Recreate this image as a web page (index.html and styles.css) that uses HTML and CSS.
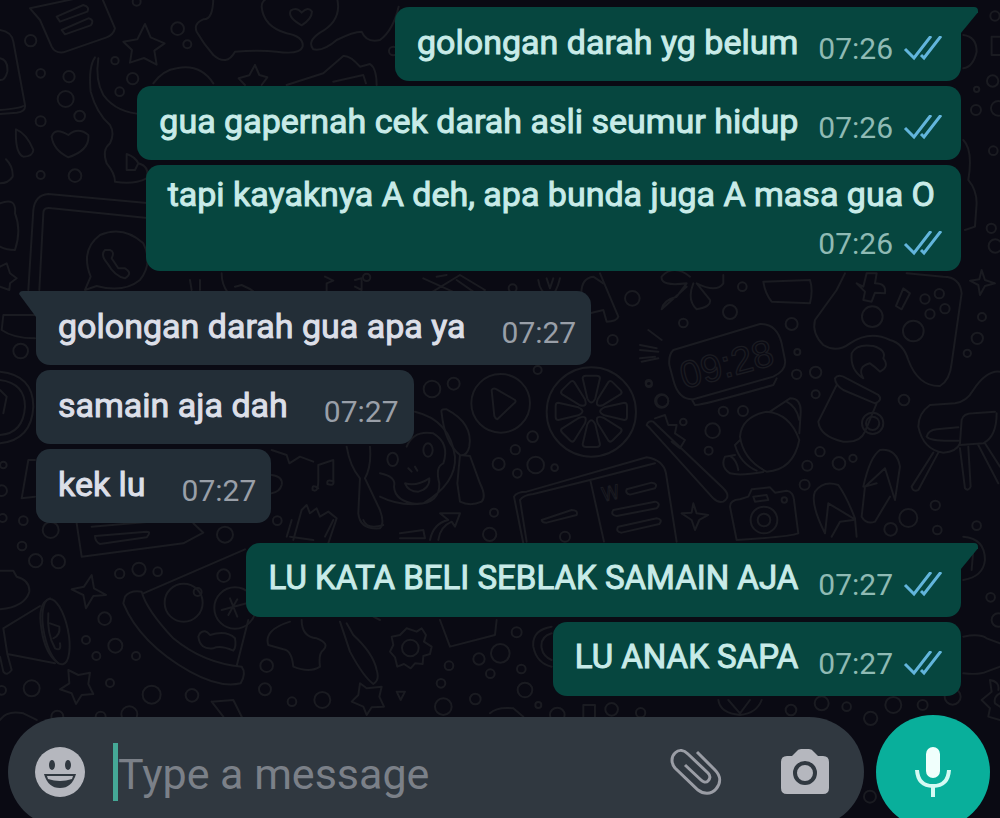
FILE: index.html
```html
<!DOCTYPE html>
<html lang="id">
<head>
    <meta charset="UTF-8">
    <meta name="viewport" content="width=device-width, initial-scale=1.0">
    <title>Chat</title>
    <link rel="stylesheet" href="styles.css">
</head>
<body>
<!-- Wallpaper -->
<svg class="wallpaper" viewBox="0 0 1000 818" preserveAspectRatio="xMinYMin slice" aria-hidden="true">
    <!-- Top left -->
    <g transform="scale(.3333)">
        <path d="M90 25L300-20L345 85Q340 105 320 112L190 157Q165 160 155 140L120 60Z M170 50L250 15Q270 20 262 35L180 65Z M185 90L265 55Q285 60 272 76L195 103Z"/>
        <path d="M435 72L452 112L494 130L463 152L470 194L432 174L390 188L396 150L370 125L412 118Z"/>
        <path d="M640-10Q640 60 610 58Q580 70 590 95Q610 130 640 165Q680 200 705 155Q780 150 830 155Q900 165 908 140Q912 110 860 100Q790 80 785 20Q785-5 820-10"/>
        <path d="M1010-10Q1030 60 960 98Q920 125 940 148Q970 155 1010 120Q1060 95 1085 95Q1100 130 1140 120Q1180 90 1196 20"/>
        <path d="M905 76Q862 52 872 32Q890 20 905 38Q925 18 936 35Q935 58 905 76Z"/>
        <path d="M0 90Q35 95 40 125L75 315Q78 335 50 338L0 342M0 330Q60 325 70 318M0 175Q25 180 22 215Q15 242 0 240"/>
        <path d="M285 172Q265 200 272 275Q290 340 330 375Q345 400 330 430Q305 450 320 490Q345 520 345 545Q400 555 440 535M295 175Q285 240 310 285Q350 340 430 342M380 510V462Q405 470 415 490Q450 500 440 535M380 510H405L415 490"/>
        <path d="M460 250Q490 210 530 205Q600 190 640 250M765 195L778 225L802 232L785 255M765 195L748 226L716 235L735 255M860 255L970 220L1030 168Q1050 165 1080 200L1110 192Q1130 205 1130 255M1000 245L1090 225L1098 250"/>
        <path d="M48 388Q80 400 100 450Q98 470 70 470Q45 460 48 388ZM18 478Q40 500 38 530Q25 550 0 550M205 472Q160 450 155 410Q165 380 205 405Q235 380 265 405Q270 450 205 472Z"/>
        <path d="M85 870L100 630Q105 585 145 582L450 610M118 870L130 640Q130 620 155 625L450 655"/>
        <path d="M255 870L272 830Q240 750 300 705Q370 675 430 730Q460 790 420 840Q370 880 290 858Z"/>
        <path d="M315 750Q300 765 322 790Q345 830 375 835Q400 820 375 805L355 805L335 775Q345 755 330 750Z"/>
        <path d="M0 610Q50 590 45 640Q65 690 45 750Q20 750 0 740M0 800L20 790L30 820L50 835L30 850L28 870L0 860"/>
        <circle cx="92" cy="122" r="17"/><circle cx="533" cy="86" r="19"/><circle cx="562" cy="133" r="12"/>
        <circle cx="345" cy="182" r="11"/><circle cx="122" cy="220" r="13"/><circle cx="207" cy="230" r="17"/>
        <circle cx="398" cy="236" r="17"/><circle cx="359" cy="275" r="13"/><circle cx="197" cy="297" r="24"/>
        <circle cx="239" cy="348" r="16"/><circle cx="122" cy="364" r="15"/><circle cx="122" cy="525" r="12"/>
        <circle cx="225" cy="527" r="19"/><circle cx="1180" cy="153" r="13"/><circle cx="410" cy="5" r="12"/>
    </g>
    <!-- Right edge -->
    <g transform="translate(600 0) scale(.3333)">
        <path d="M1090 105Q1130 110 1130 155Q1120 200 1090 205M1090 420Q1120 450 1105 540Q1130 570 1130 610L1125 680L1095 690M1175 110H1200M1175 110V165H1200"/>
        <circle cx="1185" cy="48" r="14"/><circle cx="1178" cy="243" r="17"/><circle cx="1130" cy="268" r="8"/>
        <circle cx="1128" cy="330" r="15"/><circle cx="1195" cy="325" r="22"/><circle cx="1180" cy="452" r="13"/>
        <circle cx="1174" cy="685" r="14"/><circle cx="1186" cy="738" r="20"/>
    </g>
    <!-- Strip between the first two groups -->
    <g transform="translate(0 260) scale(.3333)">
        <path d="M665 40Q665 75 685 100M705 80L725 75Q750 85 768 100M975 50L1000 62L980 70V100M1065 60L1085 55V90L1065 80M1270 55L1370 100M1290 100L1380 45L1455 90Q1450 105 1420 95L1370 60M1310 50L1340 45M1615 60Q1620 100 1650 110Q1670 100 1680 55M1640 55L1650 85L1660 55M1745 110Q1740 55 1780 50L1810 70"/>
        <circle cx="1100" cy="52" r="11"/><circle cx="1538" cy="85" r="12"/>
    </g>
    <!-- Left, beside the incoming messages -->
    <g transform="translate(0 280) scale(.3333)">
        <path d="M105 105H10L5 150Q40 175 105 175M0 275Q100 285 100 380Q95 480 0 490M0 300Q75 310 75 380Q70 460 0 465M0 330L20 350L10 400"/>
        <path d="M105 540H85L65 655L105 650M570 0L575 30M600 0L600 30"/>
        <path d="M815 510L860 525L868 550L900 530L940 545M815 585Q850 590 845 615Q840 635 815 640M955 625Q935 610 938 630Q955 640 955 600V555L1000 540V605Q980 595 982 612Q1005 620 1000 600"/>
        <path d="M880 780L905 690L920 675L930 700L950 685L960 710L985 695L1010 715L985 790M1040 500Q1050 560 1080 595L1075 700Q1080 750 1140 745Q1155 730 1140 690L1095 595Q1115 560 1110 500"/>
        <circle cx="62" cy="213" r="22"/><circle cx="70" cy="722" r="13"/><circle cx="8" cy="714" r="12"/>
        <circle cx="832" cy="722" r="13"/><circle cx="152" cy="750" r="24"/><circle cx="675" cy="764" r="24"/>
        <circle cx="5" cy="632" r="16"/><circle cx="10" cy="555" r="10"/>
    </g>
    <!-- Middle -->
    <g transform="translate(380 350) scale(.3333)">
        <circle cx="362" cy="160" r="88"/><path d="M335 120Q340 112 350 118L405 150Q410 155 400 162L352 208Q345 205 343 198Z"/>
        <circle cx="634" cy="186" r="134"/>
        <path id="slice" d="M608 85Q608 77 618 77H650Q660 77 660 85L646 145Q634 170 622 145Z"/>
        <use href="#slice" transform="rotate(45 634 184)"/><use href="#slice" transform="rotate(90 634 184)"/>
        <use href="#slice" transform="rotate(135 634 184)"/><use href="#slice" transform="rotate(180 634 184)"/>
        <use href="#slice" transform="rotate(225 634 184)"/><use href="#slice" transform="rotate(270 634 184)"/>
        <use href="#slice" transform="rotate(315 634 184)"/>
        <path d="M105 185Q210 210 225 320Q230 400 130 460Q60 470 0 440M80 290Q100 240 160 250Q210 280 190 340Q165 350 178 400Q180 460 110 462Q45 455 42 410Q50 380 0 370M75 400Q110 410 148 385Q150 415 115 425Q85 425 75 400Z"/>
        <path d="M85 355L95 365M105 350L112 362M185 190Q180 175 200 178Q280 220 268 290Q260 320 240 315Q195 280 185 190ZM240 315L232 400L240 455Q270 470 305 455Q320 440 300 400L270 318Z"/>
        <ellipse cx="38" cy="328" rx="16" ry="20"/><ellipse cx="144" cy="300" rx="14" ry="20"/>
        <path d="M430 580L402 440Q410 425 440 425L800 322Q850 330 858 370L890 575M440 575L420 450Q430 435 460 432L630 390L825 340M632 395L672 575M485 510L575 480Q595 480 590 495L500 518Q485 518 485 510Z"/>
        <path d="M740 418L815 398Q835 400 825 415L750 434Q735 430 740 418ZM700 480L825 455Q845 460 830 475L710 498Q690 495 700 480ZM715 530L830 505Q850 508 838 522L725 548Q705 545 715 530Z"/>
        <path d="M800 225Q805 210 820 215L1030 415Q1055 440 1030 455Q1015 460 1000 445L810 235ZM825 205L855 195L865 225L890 225L885 250L915 270L900 295L875 275"/>
        <path d="M60 550L130 540L135 565L60 565M150 570Q160 520 205 510L180 490L240 490L225 530L215 515Q180 530 175 570"/>
        <path d="M940 460L950 490L985 495L958 510L945 540L935 510L905 490L935 488Z"/>
        <circle cx="156" cy="117" r="25"/><circle cx="221" cy="101" r="18"/><circle cx="458" cy="260" r="16"/>
        <circle cx="406" cy="299" r="14"/><circle cx="356" cy="342" r="18"/><circle cx="467" cy="345" r="25"/>
        <circle cx="412" cy="370" r="13"/><circle cx="524" cy="353" r="10"/><circle cx="342" cy="488" r="12"/>
        <circle cx="329" cy="553" r="20"/><circle cx="847" cy="153" r="18"/><circle cx="806" cy="99" r="9"/>
        <circle cx="555" cy="560" r="15"/><circle cx="473" cy="60" r="12"/><circle cx="910" cy="216" r="10"/>
        <text class="doodle-w" x="670" y="455" transform="rotate(-12 670 455)">W</text>
    </g>
    <!-- Right of the incoming messages -->
    <g transform="translate(590 270) scale(.3333)">
        <path d="M250 240L510 162Q560 160 575 220L585 270Q590 300 550 320L310 388Q265 390 250 330L238 285Q235 255 250 240ZM305 388L315 405Q330 408 550 345L560 325"/>
        <text class="doodle-clock" x="282" y="357" transform="rotate(-15 282 357)">09:28</text>
        <path d="M765 10L740 60L675 150Q665 190 700 225Q740 250 780 220Q840 180 900 210Q940 220 955 270Q985 350 1050 348Q1080 330 1085 280L1115 70Q1110 20 1060 20L950 10"/>
        <path d="M800 40L820 50L830 10H860L855 40Q890 40 885 70L855 68L845 95L820 90L825 65ZM940 55L960 70L935 118L918 108Z"/>
        <path d="M820 325Q780 300 785 250Q800 220 850 228Q890 240 880 265Q900 290 870 305Q855 290 840 280Q800 290 820 325Z"/>
        <path d="M735 325Q745 310 770 325L865 375Q880 390 855 400L760 360Q735 345 735 325ZM740 345L685 455Q690 500 760 515Q810 520 825 485L860 400"/>
        <circle cx="848" cy="460" r="32"/><circle cx="848" cy="460" r="20"/>
        <path d="M450 500Q455 440 530 425Q600 430 628 510Q610 600 530 605Q460 570 450 500ZM540 425L600 385Q635 385 632 430L628 490M590 395Q620 410 628 450M435 525Q450 580 500 602M435 525L450 510M435 555L405 560Q390 590 420 610Q450 618 520 606M420 558Q440 570 445 600"/>
        <path d="M1230 305Q1190 300 1150 360Q1130 395 1095 400L1020 405Q985 430 985 470Q1000 540 1060 548Q1100 545 1110 520L1115 450Q1120 430 1150 430L1215 425M1110 525L1180 520Q1220 500 1220 430M1010 500Q1015 480 1040 478L1105 472M1010 500Q1020 515 1105 512M1030 548L965 650Q970 668 985 660L1045 548M1110 535L1125 655Q1135 665 1142 650L1135 530M1165 525L1225 640M1185 520L1230 590"/>
        <path d="M440 810L420 710Q420 690 450 688L475 680L485 658L540 652L555 668L590 662Q610 665 612 690L625 790Q600 800 440 810M490 680L530 675L535 690L495 695Z"/>
        <circle cx="522" cy="750" r="40"/><circle cx="522" cy="750" r="19"/><circle cx="583" cy="690" r="8"/>
        <path d="M705 790Q660 700 675 665Q700 630 745 645Q770 680 795 745L800 800M715 700L705 790M715 700L790 745M725 800L750 755L790 750M820 650Q840 560 870 540Q920 535 930 590L915 690L885 595L825 650L815 740Q830 765 855 755L900 680M825 650L860 640"/>
        <path d="M300 20Q250 -20 215 20Q210 50 290 40L260 80Q220 90 215 118L290 50M310 40Q290 90 320 118Q365 110 360 90L320 40Q380 70 400 40L400 15M520 35L660 30Q670 60 660 100L545 95Q525 70 520 35M30 10L85 140Q80 155 50 155L40 120L0 130M150 225L200 235M150 240L205 245M155 275L205 265M150 265L195 260M175 180L215 210"/>
        <path d="M1175 0L1185 30L1215 40L1185 48L1170 75L1165 45L1140 32L1168 28Z"/>
        <circle cx="127" cy="85" r="22"/><circle cx="420" cy="126" r="21"/><circle cx="605" cy="162" r="18"/>
        <circle cx="280" cy="159" r="13"/><circle cx="457" cy="50" r="13"/><circle cx="68" cy="210" r="15"/>
        <circle cx="847" cy="140" r="31"/><circle cx="970" cy="183" r="31"/><circle cx="1005" cy="87" r="14"/>
        <circle cx="1048" cy="71" r="14"/><circle cx="1020" cy="132" r="14"/><circle cx="1065" cy="116" r="14"/>
        <circle cx="1176" cy="141" r="12"/><circle cx="1162" cy="205" r="17"/><circle cx="1132" cy="250" r="11"/>
        <circle cx="215" cy="393" r="20"/><circle cx="177" cy="342" r="9"/><circle cx="368" cy="482" r="22"/>
        <circle cx="356" cy="542" r="12"/><circle cx="400" cy="424" r="14"/><circle cx="459" cy="423" r="15"/>
        <circle cx="620" cy="313" r="14"/><circle cx="677" cy="307" r="17"/><circle cx="677" cy="373" r="12"/>
        <circle cx="622" cy="246" r="9"/><circle cx="942" cy="390" r="16"/><circle cx="690" cy="545" r="14"/>
        <circle cx="652" cy="587" r="15"/><circle cx="747" cy="580" r="19"/><circle cx="789" cy="565" r="11"/>
        <circle cx="644" cy="644" r="15"/><circle cx="1036" cy="706" r="14"/><circle cx="955" cy="744" r="27"/>
        <circle cx="902" cy="778" r="19"/><circle cx="1042" cy="780" r="13"/><circle cx="1160" cy="767" r="13"/>
    </g>
    <!-- Bottom left -->
    <g transform="translate(0 520) scale(.3333)">
        <path d="M230 10L245 110L550 70L610 38L580 10M275 20L450 5M285 48L440 35Q455 35 440 52L300 72Q285 65 285 48"/>
        <path d="M275 165L282 205L318 225L280 228L258 265L250 225L215 208L252 200Z"/>
        <path d="M0 152H40L50 170Q90 180 88 215Q75 260 0 268M10 325L120 258M22 402L165 430M10 325L22 402L35 450Q20 470 10 455L0 410"/>
        <ellipse cx="168" cy="335" rx="36" ry="100" transform="rotate(-12 168 335)"/>
        <path d="M150 235Q110 250 125 330Q135 400 175 430M145 280Q140 340 165 385Q185 395 180 370M150 310L178 320Q182 345 160 355"/>
        <path d="M430 220L735 88M375 230Q390 210 425 215Q440 270 520 355Q610 430 725 440Q740 460 722 490Q660 505 570 455Q420 370 370 250ZM745 300L710 438"/>
        <circle cx="551" cy="248" r="57"/><circle cx="593" cy="216" r="12"/><circle cx="705" cy="264" r="62"/>
        <path d="M665 270L740 250M690 235L712 290M712 238L685 285M600 340Q615 325 630 345Q680 330 705 355Q710 380 700 392Q660 375 640 385Q600 390 595 350Z"/>
        <path d="M205 450L235 465L270 458L265 492L280 522L245 525L228 552L215 520L180 508L208 490Z"/>
        <path d="M905 300Q905 350 950 355Q990 370 970 390Q955 400 960 440Q930 460 880 440Q875 390 850 388L805 375Q790 330 870 305M0 600Q20 570 70 580L110 600M635 545L700 540L730 600M635 545L670 590"/>
        <circle cx="107" cy="122" r="20"/><circle cx="175" cy="125" r="20"/><circle cx="66" cy="78" r="13"/>
        <circle cx="359" cy="161" r="14"/><circle cx="417" cy="148" r="20"/><circle cx="473" cy="155" r="13"/>
        <circle cx="671" cy="167" r="19"/><circle cx="314" cy="296" r="19"/><circle cx="258" cy="360" r="12"/>
        <circle cx="346" cy="377" r="21"/><circle cx="289" cy="408" r="12"/><circle cx="408" cy="408" r="12"/>
        <circle cx="95" cy="505" r="24"/><circle cx="330" cy="489" r="12"/><circle cx="455" cy="524" r="27"/>
        <circle cx="576" cy="526" r="19"/><circle cx="5" cy="511" r="13"/><circle cx="388" cy="583" r="24"/>
        <circle cx="800" cy="437" r="19"/><circle cx="795" cy="508" r="18"/><circle cx="876" cy="545" r="13"/>
        <circle cx="967" cy="540" r="24"/><circle cx="172" cy="590" r="18"/><circle cx="302" cy="590" r="15"/>
    </g>
    <!-- Bottom middle -->
    <g transform="translate(250 520) scale(.3333)">
        <path d="M270 305L300 395Q340 470 370 492Q390 480 380 450Q370 400 310 345L290 310M570 300L600 380L735 345L740 300M905 320Q845 330 850 380Q860 430 905 440M905 340Q870 350 875 385Q880 410 905 420"/>
        <path d="M470 325L500 335L515 325L528 345L522 365L545 380L540 402L520 408L518 432L495 430L482 445L462 432L442 440L435 412L420 395L430 375L425 350L450 345Z"/>
        <circle cx="481" cy="384" r="25"/>
        <path d="M330 490L350 505L395 500L388 530L402 560L365 562L350 585L340 560L305 545L325 525ZM440 515L465 515L452 540ZM370 290L390 300M110 50L125 0M225 50L250 0M120 50L190 60M340 0Q350 30 400 15"/>
        <path d="M720 580Q740 560 790 565L820 590M1000 590L1000 555H1035V590"/>
        <circle cx="800" cy="337" r="15"/><circle cx="751" cy="400" r="28"/>
        <circle cx="687" cy="417" r="17"/><circle cx="597" cy="437" r="13"/><circle cx="814" cy="447" r="13"/>
        <circle cx="721" cy="461" r="13"/><circle cx="573" cy="490" r="13"/><circle cx="825" cy="510" r="22"/>
        <circle cx="676" cy="537" r="16"/><circle cx="580" cy="560" r="25"/><circle cx="865" cy="555" r="9"/>
        <circle cx="922" cy="585" r="22"/><circle cx="1085" cy="568" r="19"/><circle cx="1172" cy="578" r="14"/>
    </g>
    <!-- Bottom right -->
    <g transform="translate(640 530) scale(.3333)">
        <path d="M235 510Q240 550 300 555Q350 550 365 510M265 510L300 550L330 510M970 20Q1035 25 1035 90Q1030 140 970 150M970 80L1000 60L995 120M970 320Q1020 310 1040 325L1080 340M970 430Q1020 435 1040 425L1080 410"/>
        <path d="M1050 450Q1080 455 1075 480M1050 450L1055 485L1025 510L1050 535L1045 560L1080 570M1080 490Q1060 500 1065 520L1080 530"/>
        <circle cx="453" cy="540" r="16"/><circle cx="545" cy="520" r="21"/><circle cx="620" cy="530" r="13"/>
        <circle cx="692" cy="565" r="20"/><circle cx="760" cy="525" r="24"/><circle cx="848" cy="525" r="15"/>
        <circle cx="938" cy="500" r="24"/><circle cx="1052" cy="202" r="13"/><circle cx="1075" cy="270" r="20"/>
        <circle cx="690" cy="800" r="18"/>
    </g>
</svg>

<!-- Shared tick icon -->
<svg class="sprite" aria-hidden="true">
    <symbol id="ticks" viewBox="0 0 40 26">
        <path d="M2 13L11 22L28 0M18 19L21 22L38 0" fill="none" stroke="currentColor" stroke-width="3"/>
    </symbol>
</svg>

<div class="chat">
    <main class="messages">
        <div class="group sent">
            <div class="bubble tail">
                <span class="text">golongan darah yg belum</span>
                <span class="meta"><time>07:26</time><svg class="ticks"><use href="#ticks"/></svg></span>
            </div>
            <div class="bubble">
                <span class="text">gua gapernah cek darah asli seumur hidup</span>
                <span class="meta"><time>07:26</time><svg class="ticks"><use href="#ticks"/></svg></span>
            </div>
            <div class="bubble stacked">
                <span class="text">tapi kayaknya A deh, apa bunda juga A masa gua O</span>
                <span class="meta"><time>07:26</time><svg class="ticks"><use href="#ticks"/></svg></span>
            </div>
        </div>
        <div class="group received">
            <div class="bubble tail">
                <span class="text">golongan darah gua apa ya</span>
                <span class="meta"><time>07:27</time></span>
            </div>
            <div class="bubble">
                <span class="text">samain aja dah</span>
                <span class="meta"><time>07:27</time></span>
            </div>
            <div class="bubble">
                <span class="text">kek lu</span>
                <span class="meta"><time>07:27</time></span>
            </div>
        </div>
        <div class="group sent">
            <div class="bubble tail">
                <span class="text caps">LU KATA BELI SEBLAK SAMAIN AJA</span>
                <span class="meta"><time>07:27</time><svg class="ticks"><use href="#ticks"/></svg></span>
            </div>
            <div class="bubble">
                <span class="text caps">LU ANAK SAPA</span>
                <span class="meta"><time>07:27</time><svg class="ticks"><use href="#ticks"/></svg></span>
            </div>
        </div>
    </main>

    <form class="composer">
        <div class="field">
            <button type="button" class="icon-btn" aria-label="Emoji">
                <svg width="50" height="50" viewBox="0 0 50 50">
                    <circle cx="25" cy="25" r="25" fill="#b5b7be"/>
                    <ellipse cx="17" cy="18" rx="3" ry="5" fill="#303840"/>
                    <ellipse cx="33" cy="18" rx="3" ry="5" fill="#303840"/>
                    <path d="M9 27H41Q37 41 25 41Q13 41 9 27Z" fill="#303840"/>
                    <path d="M12 29H38L37 32Q25 36 13 32Z" fill="#b5b7be"/>
                </svg>
            </button>
            <div class="entry">
                <input type="text" placeholder="Type a message" aria-label="Message">
            </div>
            <button type="button" class="icon-btn" aria-label="Attach">
                <svg width="52" height="48" viewBox="0 0 52 48">
                    <path d="M27 4L45 22C51 28 51 35 46 41C41 47 33 46 28 42L5 20C1 15 1 9 5 5C9 1 14 2 18 6L38 25C41 28 40 31 38 33C36 35 33 34 31 32L15 17" fill="none" stroke="#9a9da5" stroke-width="3"/>
                </svg>
            </button>
            <button type="button" class="icon-btn" aria-label="Camera">
                <svg width="50" height="46" viewBox="0 0 50 46">
                    <path d="M7 7H12L16 3Q18 0 21 0H29Q32 0 34 3L38 7H43Q49 7 49 13V39Q49 45 43 45H7Q1 45 1 39V13Q1 7 7 7Z" fill="#b5b7be"/>
                    <circle cx="25" cy="24" r="10" fill="none" stroke="#303840" stroke-width="4"/>
                </svg>
            </button>
        </div>
        <button type="button" class="mic-btn" aria-label="Voice message">
            <svg width="38" height="52" viewBox="0 0 38 52">
                <rect x="12" y="1" width="14" height="31" rx="7" fill="#f0fffc"/>
                <path d="M3 24Q4 40 19 40Q34 40 35 24M19 40V51" fill="none" stroke="#d5faf3" stroke-width="4"/>
            </svg>
        </button>
    </form>
</div>
</body>
</html>
```
FILE: styles.css
```css
body {
    margin: 0;
    height: 100vh;
    overflow: hidden;
    background-color: #0a0a13;
    font-family: Roboto, sans-serif;
}

.wallpaper {
    position: absolute;
    top: 0;
    left: 0;
    width: 100%;
    height: 100%;
    fill: none;
    stroke: #1a1b21;
    stroke-width: 6;
    stroke-linejoin: round;
    stroke-linecap: round;
}

.doodle-clock {
    font-family: "Liberation Sans", sans-serif;
    font-size: 114px;
    stroke-width: 4;
}

.doodle-w {
    font-family: Roboto, sans-serif;
    font-size: 60px;
    stroke-width: 3;
}

.sprite {
    position: absolute;
    width: 0;
    height: 0;
}

.chat {
    position: relative;
    display: flex;
    flex-direction: column;
}

.messages {
    display: flex;
    flex-direction: column;
    gap: 20px;
    padding: 7px 39px 19px 36px;
}

.group {
    display: flex;
    flex-direction: column;
    gap: 5px;
}

.sent {
    align-items: flex-end;
}

.received {
    align-items: flex-start;
}

.bubble {
    position: relative;
    display: flex;
    gap: 20px;
    box-sizing: border-box;
    min-height: 74px;
    padding: 14px 18px 15px 22px;
    border-radius: 14px;
    line-height: 42px;
}

.sent .bubble {
    background-color: #06463f;
    color: #c8ebe8;
}

.received .bubble {
    gap: 36px;
    padding-right: 15px;
    background-color: #232e37;
    color: #dcdfe8;
}

.bubble.stacked {
    flex-direction: column;
    gap: 12px;
    padding-top: 8px;
    padding-bottom: 10px;
}

.text {
    font-size: 34px;
    -webkit-text-stroke: 1px currentColor;
}

.text.caps {
    font-size: 33px;
}

.stacked .text {
    padding-right: 8px;
}

/* Little corner pointing to the sender */
.tail::before {
    content: "";
    position: absolute;
    top: 0;
    width: 17px;
    height: 26px;
    background-color: inherit;
}

.sent .tail {
    border-top-right-radius: 0;
}

.sent .tail::before {
    left: 100%;
    border-top-right-radius: 4px;
    clip-path: polygon(0 0, 100% 0, 100% 20%, 0 100%);
}

.received .tail {
    border-top-left-radius: 0;
}

.received .tail::before {
    right: 100%;
    border-top-left-radius: 4px;
    clip-path: polygon(0 0, 100% 0, 100% 100%, 0 12%);
}

.meta {
    display: flex;
    align-items: center;
    align-self: flex-end;
    gap: 10px;
    font-size: 30px;
    line-height: 34px;
}

.sent .meta {
    color: #8fbab4;
}

.received .meta {
    color: #999fa8;
}

.ticks {
    width: 40px;
    height: 26px;
    color: #62b5dc;
}

.composer {
    display: flex;
    align-items: center;
    gap: 12px;
    padding: 0 10px 0 8px;
}

.field {
    flex: 1;
    display: flex;
    align-items: center;
    box-sizing: border-box;
    min-width: 0;
    height: 110px;
    padding: 0 34px 0 27px;
    border-radius: 55px;
    background-color: #303840;
}

.icon-btn {
    display: flex;
    flex-shrink: 0;
    padding: 0;
    border: none;
    background: none;
    cursor: pointer;
}

.icon-btn + .icon-btn {
    margin-left: 58px;
}

.entry {
    flex: 1;
    display: flex;
    align-items: center;
    min-width: 0;
    margin: 0 28px;
    border-left: 5px solid #45a896;
}

.entry input {
    flex: 1;
    min-width: 0;
    height: 58px;
    padding: 4px 0 0;
    box-sizing: border-box;
    border: none;
    outline: none;
    background: none;
    color: #dcdfe8;
    font-family: inherit;
    font-size: 43px;
}

.entry input::placeholder {
    color: #7b8088;
    opacity: 1;
}

.mic-btn {
    display: flex;
    flex-shrink: 0;
    align-items: center;
    justify-content: center;
    width: 114px;
    height: 114px;
    padding: 0;
    border: none;
    border-radius: 50%;
    background-color: #09af9b;
    cursor: pointer;
}
```
